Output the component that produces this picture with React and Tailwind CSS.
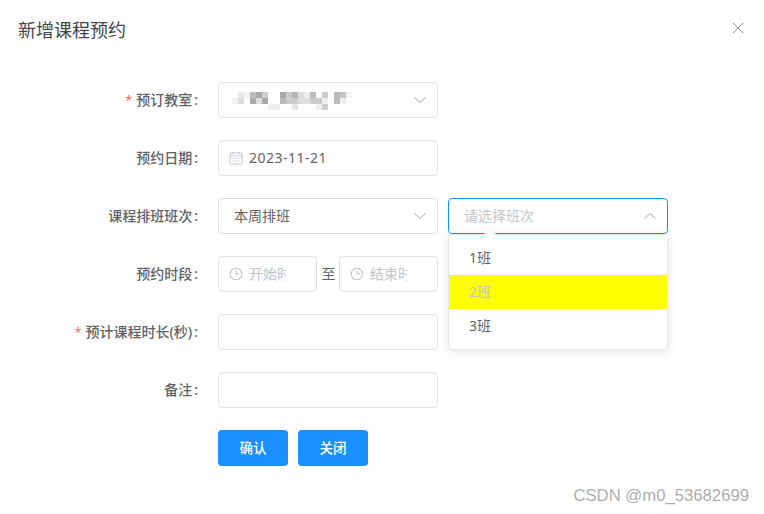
import React from 'react';

const font = { fontFamily: '"Noto Sans", "Noto Sans CJK SC", sans-serif' };

const MOSAIC = [
  [1, 0, '#e8e8e8'], [2, 0, '#f2f2f2'], [3, 0, '#bbbbbb'], [4, 0, '#aaaaaa'], [5, 0, '#cccccc'],
  [8, 0, '#aaaaaa'], [9, 0, '#cccccc'], [10, 0, '#b5b5b5'], [11, 0, '#dddddd'], [12, 0, '#eeeeee'],
  [13, 0, '#bbbbbb'], [15, 0, '#cccccc'], [17, 0, '#bbbbbb'], [18, 0, '#c5c5c5'], [19, 0, '#f5f5f5'],
  [0, 1, '#f3f3f3'], [1, 1, '#dddddd'], [3, 1, '#aaaaaa'], [4, 1, '#dddddd'], [5, 1, '#aaaaaa'],
  [8, 1, '#bbbbbb'], [9, 1, '#cccccc'], [10, 1, '#cccccc'], [11, 1, '#dddddd'], [12, 1, '#e0e0e0'],
  [13, 1, '#cccccc'], [14, 1, '#cccccc'], [15, 1, '#eeeeee'], [17, 1, '#bbbbbb'], [18, 1, '#eeeeee'],
  [6, 2, '#eeeeee'], [7, 2, '#eeeeee'], [10, 2, '#e5e5e5'], [14, 2, '#eeeeee'], [15, 2, '#cccccc']
];

const Chevron = ({ up }) => (
  <svg width="14" height="14" viewBox="0 0 14 14" fill="none" stroke="#c0c4cc" strokeWidth="1.1" className="shrink-0">
    <path d={up ? 'M1.5 9.5 7 4.5l5.5 5' : 'M1.5 4.5 7 9.5l5.5-5'} />
  </svg>
);

const DateIcon = () => (
  <svg width="14" height="14" viewBox="0 0 14 14" fill="none" stroke="#c0c4cc" strokeWidth="1" className="shrink-0">
    <rect x="1" y="2" width="12" height="11" rx="1" />
    <path d="M1 5h12M4 1v2M10 1v2" />
    <path d="M3.5 7.5h7M3.5 10h7" strokeDasharray="1.4 1" />
  </svg>
);

const ClockIcon = () => (
  <svg width="14" height="14" viewBox="0 0 14 14" fill="none" stroke="#c0c4cc" strokeWidth="1.1" className="shrink-0">
    <circle cx="7" cy="7" r="5.8" />
    <path d="M7 3.5V7h3" />
  </svg>
);

const Box = ({ active, className = '', children }) => (
  <div className={`h-9 w-[220px] rounded border ${active ? 'border-[#1890ff]' : 'border-[#dcdfe6]'} bg-white flex items-center text-sm text-[#606266] ${className}`}>
    {children}
  </div>
);

const Row = ({ label, required, children }) => (
  <div className="flex items-center h-9">
    <label className="w-[198px] shrink-0 text-right text-sm font-medium text-[#606266]">
      {required && <span className="text-xs text-[#f56c6c] mr-1">*</span>}
      {label}
      <span className="ml-[2px]">:</span>
    </label>
    <div className="ml-5 flex items-center">{children}</div>
  </div>
);

const TimeBox = ({ text }) => (
  <div className="h-9 w-[99px] rounded border border-[#dcdfe6] flex items-center pl-[10px] gap-[6px] text-sm text-[#c0c4cc]">
    <ClockIcon />
    <span className="w-[37px] overflow-hidden whitespace-nowrap">{text}</span>
  </div>
);

export default function App() {
  return (
    <div className="relative h-[514px] w-[764px] overflow-hidden bg-white" style={font}>
      {/* Header */}
      <div className="flex items-center justify-between h-[60px] pl-[18px] pr-[20px]">
        <h2 className="text-lg leading-6 text-[#43454a]">新增课程预约</h2>
        <svg width="12" height="12" viewBox="0 0 12 12" stroke="#909399" strokeWidth="1" className="-mt-1">
          <path d="M1 1l10 10M11 1 1 11" />
        </svg>
      </div>

      {/* Form */}
      <div className="mt-[22px] flex flex-col gap-[22px]">
        <Row label="预订教室" required>
          <Box className="pl-[13px] pr-[10px] justify-between">
            <svg width="120" height="18" viewBox="0 0 120 18" className="mt-[2px] shrink-0">
              {MOSAIC.map(([x, y, fill]) => (
                <rect key={`${x}-${y}`} x={x * 6} y={y * 6} width="6" height="6" fill={fill} />
              ))}
            </svg>
            <Chevron />
          </Box>
        </Row>
        <Row label="预约日期">
          <Box className="pl-[10px] gap-[6px]">
            <DateIcon />
            <span className="tracking-[0.5px]">2023-11-21</span>
          </Box>
        </Row>
        <Row label="课程排班班次">
          <Box className="pl-[15px] pr-[10px] justify-between">
            <span>本周排班</span>
            <Chevron />
          </Box>
          <div className="relative ml-[10px]">
            <Box active className="pl-[15px] pr-[10px] justify-between text-[#c0c4cc]">
              <span>请选择班次</span>
              <Chevron up />
            </Box>
            {/* Dropdown */}
            <div className="absolute left-0 top-9 z-10 w-[220px] rounded border border-[#e4e7ed] bg-white py-[6px] text-sm text-[#606266] shadow-[0_2px_12px_rgba(0,0,0,0.1)]">
              <div className="absolute -top-[5px] left-[37px] h-2 w-2 rotate-45 border-l border-t border-[#ebeef5] bg-white" />
              <div className="h-[34px] leading-[34px] pl-5">1班</div>
              <div className="h-[34px] leading-[34px] pl-5 bg-[#ffff00] text-[#c0c4cc]">2班</div>
              <div className="h-[34px] leading-[34px] pl-5">3班</div>
            </div>
          </div>
        </Row>
        <Row label="预约时段">
          <TimeBox text="开始时间" />
          <span className="w-[22px] pl-[1px] text-center text-sm text-[#606266]">至</span>
          <TimeBox text="结束时间" />
        </Row>
        <Row label="预计课程时长(秒)" required>
          <Box />
        </Row>
        <Row label="备注">
          <Box />
        </Row>
        <div className="ml-[218px] flex gap-[10px]">
          <button className="h-9 w-[70px] rounded bg-[#1890ff] text-[13.5px] font-medium text-white">确认</button>
          <button className="h-9 w-[70px] rounded bg-[#1890ff] text-[13.5px] font-medium text-white">关闭</button>
        </div>
      </div>

      {/* Watermark */}
      <div className="absolute bottom-[6px] right-[15px] text-[16.7px] text-[#adadad]" style={{ fontFamily: '"Liberation Sans", sans-serif' }}>
        CSDN @m0_53682699
      </div>
    </div>
  );
}
